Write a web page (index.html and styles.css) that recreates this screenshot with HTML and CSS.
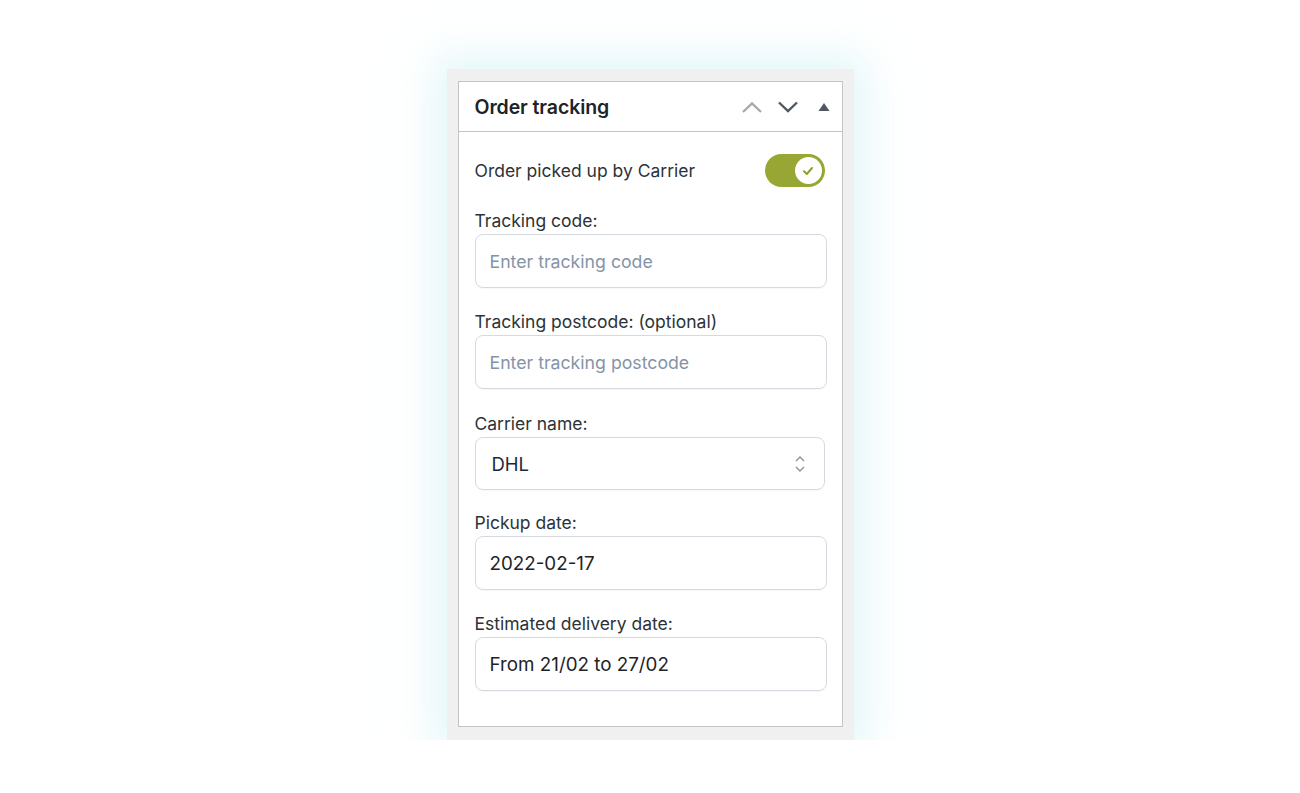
FILE: index.html
```html
<!DOCTYPE html>
<html lang="en">
<head>
<meta charset="utf-8">
<title>Order tracking</title>
<link rel="stylesheet" href="styles.css">
</head>
<body>
<div class="stage">
  <div class="frame">
    <div class="panel">
      <div class="panel-head">
        <h2 class="panel-title">Order tracking</h2>
        <div class="head-actions">
          <svg class="hicon up" width="22" height="14" viewBox="0 0 22 14"><path d="M2 12 L11 3.5 L20 12" fill="none" stroke="currentColor" stroke-width="2.4"/></svg>
          <svg class="hicon down" width="22" height="14" viewBox="0 0 22 14"><path d="M2 2.5 L11 11 L20 2.5" fill="none" stroke="currentColor" stroke-width="2.4"/></svg>
          <svg class="hicon tri" width="14" height="14" viewBox="0 0 14 14"><path d="M1.5 11 L7 3 L12.5 11 Z" fill="currentColor"/></svg>
        </div>
      </div>
      <div class="panel-body">
        <div class="toggle-row">
          <span class="toggle-label">Order picked up by Carrier</span>
          <span class="toggle">
            <span class="knob">
              <svg width="14" height="14" viewBox="0 0 14 14"><path d="M3 7.2 L5.8 10 L11 4" fill="none" stroke="#8f9f2c" stroke-width="2" stroke-linecap="round" stroke-linejoin="round"/></svg>
            </span>
          </span>
        </div>
        <div class="field f1">
          <label class="label">Tracking code:</label>
          <div class="input placeholder">Enter tracking code</div>
        </div>
        <div class="field f2">
          <label class="label">Tracking postcode: (optional)</label>
          <div class="input placeholder">Enter tracking postcode</div>
        </div>
        <div class="field f3">
          <label class="label">Carrier name:</label>
          <div class="input select">
            <span>DHL</span>
            <svg class="sel-arrows" width="12" height="20" viewBox="0 0 12 20"><path d="M2 7 L6 3 L10 7 M2 13 L6 17 L10 13" fill="none" stroke="#8a93a3" stroke-width="1.4"/></svg>
          </div>
        </div>
        <div class="field f4">
          <label class="label">Pickup date:</label>
          <div class="input value">2022-02-17</div>
        </div>
        <div class="field f5">
          <label class="label">Estimated delivery date:</label>
          <div class="input value">From 21/02 to 27/02</div>
        </div>
      </div>
    </div>
  </div>
</div>
</body>
</html>
```

FILE: styles.css
```css
html, body {
  margin: 0;
  padding: 0;
  background: #ffffff;
}
body {
  font-family: Inter, "Noto Sans", "Liberation Sans", sans-serif;
  color: #2c3338;
}
.stage {
  display: flex;
  justify-content: center;
  padding-top: 69px;
}
.frame {
  width: 385px;
  background: #f0f0f1;
  padding: 12px 11px 13px 11px;
  box-shadow: 0 0 40px 12px rgba(200, 238, 244, 0.55);
}
.panel {
  background: #fff;
  border: 1px solid #c3c4c7;
}
.panel-head {
  height: 49px;
  border-bottom: 1px solid #c3c4c7;
  display: flex;
  align-items: center;
  justify-content: space-between;
  padding: 0 11px 0 16px;
}
.panel-title {
  margin: 0;
  font-size: 19.5px;
  font-weight: 600;
  color: #1d2327;
  letter-spacing: -0.1px;
}
.head-actions {
  display: flex;
  align-items: center;
  gap: 14px;
}
.hicon.up { color: #a7aaad; }
.hicon.down { color: #50575e; }
.hicon.tri { color: #50575e; margin-left: 4px; }
.panel-body {
  padding: 22px 15px 35px 16px;
}
.toggle-row {
  display: flex;
  align-items: center;
  justify-content: space-between;
  height: 33px;
  padding-right: 2px;
}
.toggle-label {
  font-size: 17.5px;
}
.toggle {
  width: 60px;
  height: 33px;
  border-radius: 17px;
  background: #98a734;
  display: flex;
  align-items: center;
  justify-content: flex-end;
  padding-right: 3px;
  box-sizing: border-box;
}
.knob {
  width: 27px;
  height: 27px;
  border-radius: 50%;
  background: #fff;
  display: flex;
  align-items: center;
  justify-content: center;
}
.field.f1 { margin-top: 23px; }
.field.f2 { margin-top: 23px; }
.field.f3 { margin-top: 24px; }
.field.f4 { margin-top: 22px; }
.field.f5 { margin-top: 23px; }
.label {
  display: block;
  font-size: 17.5px;
  line-height: 22px;
  margin-bottom: 2px;
  color: #2c3338;
}
.input {
  height: 54px;
  box-sizing: border-box;
  border: 1px solid #d6dae0;
  border-radius: 8px;
  display: flex;
  align-items: center;
  padding: 0 14px;
  font-size: 17.7px;
  box-shadow: 0 1px 1px rgba(0,0,0,0.03);
}
.placeholder {
  color: #8494a8;
}
.value {
  color: #1d2327;
  font-size: 18.8px;
}
.select {
  height: 53px;
  width: calc(100% - 2px);
  justify-content: space-between;
  color: #1d2a3b;
  font-size: 18.5px;
  padding-left: 16px;
  padding-right: 18px;
}
```
